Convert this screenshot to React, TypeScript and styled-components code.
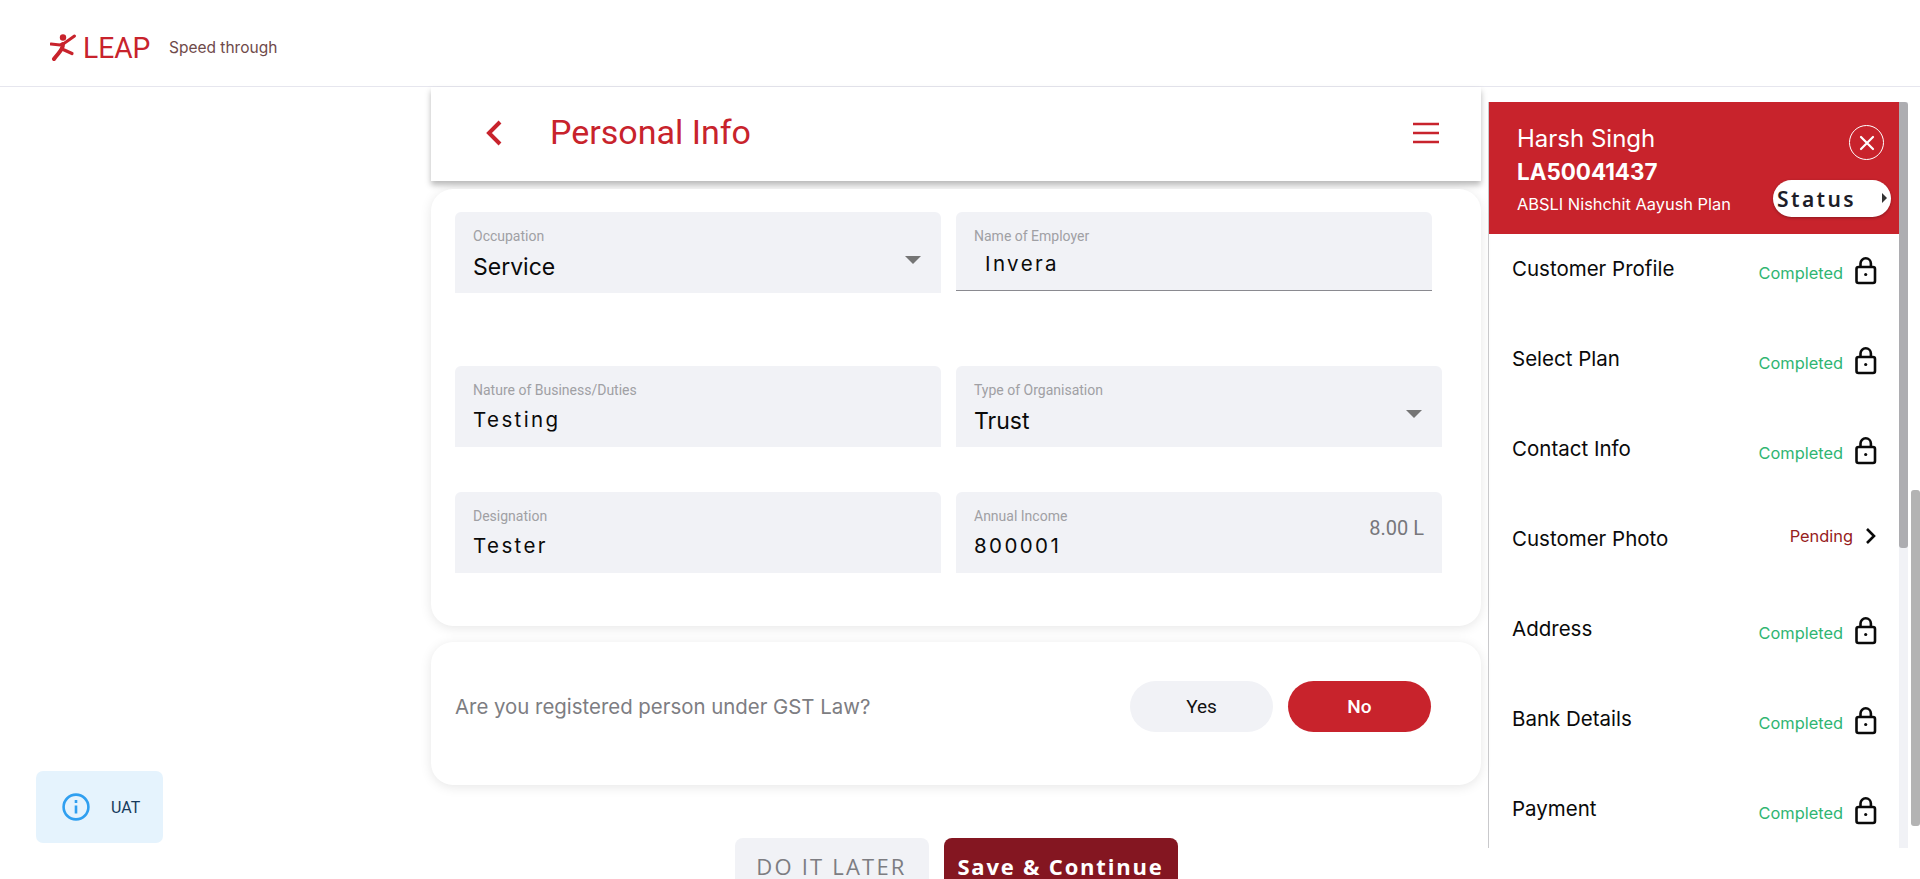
import React from "react";
import styled, { createGlobalStyle } from "styled-components";

const GlobalStyle = createGlobalStyle`
  html, body {
    margin: 0;
    padding: 0;
    height: 100%;
    overflow: hidden;
    background: #fff;
    font-family: "Inter", "Liberation Sans", sans-serif;
  }
  * { box-sizing: border-box; }
`;

const Page = styled.div`
  width: 1920px;
  height: 879px;
  display: flex;
  flex-direction: column;
  overflow: hidden;
  position: relative;
`;

const TopBar = styled.header`
  height: 87px;
  flex: none;
  display: flex;
  align-items: center;
  padding: 9px 0 0 50px;
  border-bottom: 1px solid #e6e6ee;
`;

const LogoWord = styled.span`
  font-family: "Roboto", sans-serif;
  font-size: 30px;
  color: #c8232c;
  margin-left: 6px;
  transform: scaleX(0.94);
  transform-origin: left center;
  width: 67px;
`;

const Tagline = styled.span`
  font-family: "Inter", sans-serif;
  font-size: 15.5px;
  color: #6f4a4a;
  margin-left: 19px;
`;

const Body = styled.div`
  flex: 1;
  min-height: 0;
  display: flex;
  padding-left: 431px;
`;

const Main = styled.main`
  width: 1050px;
  flex: none;
  display: flex;
  flex-direction: column;
`;

const TitleBar = styled.div`
  height: 94px;
  flex: none;
  display: flex;
  align-items: center;
  padding: 0 42px 3px 54px;
  background: #fff;
  box-shadow: 0 4px 6px rgba(0, 0, 0, 0.28);
`;

const Title = styled.h1`
  font-family: "Roboto", sans-serif;
  font-weight: 400;
  font-size: 34px;
  color: #c8232c;
  margin: 0 0 2px 47px;
  flex: 1;
`;

const Card = styled.section`
  background: #fff;
  border-radius: 22px;
  flex: none;
  box-shadow: 0 2px 12px rgba(0, 0, 0, 0.1);
`;

const FormCard = styled(Card)`
  height: 437px;
  margin-top: 8px;
  padding: 23px 24px 0;
`;

const FieldRow = styled.div<{ $gap: number }>`
  display: grid;
  grid-template-columns: 486px 486px;
  column-gap: 15px;
  margin-bottom: ${({ $gap }) => $gap}px;
`;

const Field = styled.div<{ $underlined?: boolean; $narrow?: boolean }>`
  height: ${({ $underlined }) => ($underlined ? "79px" : "81px")};
  width: ${({ $narrow }) => ($narrow ? "476px" : "100%")};
  background: #f1f2f6;
  border-radius: 6px 6px 0 0;
  padding: 16px 18px 0;
  position: relative;
  border-bottom: ${({ $underlined }) => ($underlined ? "1px solid #8a8a90" : "none")};
`;

const FieldLabel = styled.div`
  font-family: "Roboto", sans-serif;
  font-size: 14px;
  line-height: 17px;
  color: #a0a0a4;
`;

const FieldValue = styled.div<{ $spaced?: boolean; $indent?: boolean }>`
  font-family: "Inter", sans-serif;
  font-size: ${({ $spaced }) => ($spaced ? "20.5px" : "23px")};
  line-height: 28px;
  margin-top: ${({ $spaced, $indent }) => ($indent ? "5px" : $spaced ? "7px" : "8px")};
  color: #0a0a0a;
  letter-spacing: ${({ $spaced }) => ($spaced ? "2.4px" : "0")};
  padding-left: ${({ $indent }) => ($indent ? "11px" : "0")};
`;

const Caret = styled.span`
  position: absolute;
  right: 20px;
  top: 44px;
  width: 0;
  height: 0;
  border-left: 8px solid transparent;
  border-right: 8px solid transparent;
  border-top: 8px solid #757575;
`;

const Suffix = styled.span`
  position: absolute;
  right: 18px;
  top: 24px;
  font-family: "Roboto", sans-serif;
  font-size: 20px;
  color: #77777b;
`;

const GstCard = styled(Card)`
  height: 143px;
  margin-top: 16px;
  padding: 0 50px 0 24px;
  display: flex;
  align-items: center;
  justify-content: space-between;
`;

const GstQuestion = styled.span`
  font-size: 20.4px;
  color: #7d7d82;
  margin-top: -14px;
`;

const Choice = styled.div`
  display: flex;
  gap: 15px;
  margin-top: -15px;
`;

const Pill = styled.button<{ $active?: boolean }>`
  width: 143px;
  height: 51px;
  border: none;
  border-radius: 26px;
  font-family: "Roboto", sans-serif;
  font-size: 19px;
  font-weight: ${({ $active }) => ($active ? 500 : 400)};
  background: ${({ $active }) => ($active ? "#c8232c" : "#f1f2f6")};
  color: ${({ $active }) => ($active ? "#fff" : "#111")};
`;

const Actions = styled.div`
  display: flex;
  flex: none;
  justify-content: center;
  gap: 15px;
  margin-top: 53px;
`;

const ActionButton = styled.button<{ $primary?: boolean }>`
  height: 60px;
  width: ${({ $primary }) => ($primary ? "234px" : "194px")};
  border: none;
  border-radius: 8px;
  padding: 0 0 4px;
  flex: none;
  font-family: "Open Sans", sans-serif;
  font-size: 22px;
  letter-spacing: ${({ $primary }) => ($primary ? "1.8px" : "2.2px")};
  font-weight: ${({ $primary }) => ($primary ? 700 : 400)};
  background: ${({ $primary }) => ($primary ? "#841621" : "#f1f2f6")};
  color: ${({ $primary }) => ($primary ? "#fff" : "#7d7d82")};
`;

const Side = styled.aside`
  width: 421px;
  flex: none;
  margin-left: 7px;
  margin-top: 15px;
  height: 746px;
  display: flex;
  position: relative;
`;

const SidePanel = styled.div`
  width: 411px;
  border-left: 1px solid #c9c9cc;
  display: flex;
  flex-direction: column;
`;

const SideHead = styled.div`
  height: 132px;
  flex: none;
  background: #c8232c;
  color: #fff;
  padding: 21px 0 0 28px;
  position: relative;
`;

const Customer = styled.div`
  font-size: 24px;
  line-height: 32px;
`;

const AppNumber = styled.div`
  font-size: 22.4px;
  font-weight: 700;
  line-height: 34px;
`;

const PlanName = styled.div`
  font-size: 16.4px;
  line-height: 30px;
`;

const CloseButton = styled.button`
  position: absolute;
  right: 15px;
  top: 23px;
  width: 35px;
  height: 35px;
  padding: 0;
  border-radius: 50%;
  border: 1px solid #fff;
  background: transparent;
  display: flex;
  align-items: center;
  justify-content: center;
`;

const StatusPill = styled.div`
  position: absolute;
  right: 8px;
  bottom: 17px;
  width: 118px;
  height: 37px;
  border-radius: 19px;
  background: #fff;
  box-shadow: 0 1px 3px rgba(0, 0, 0, 0.3);
  font-family: "Noto Sans", sans-serif;
  font-weight: 600;
  font-size: 21px;
  letter-spacing: 2.4px;
  color: #1d1d28;
  display: flex;
  align-items: center;
  padding-left: 4px;
`;

const StatusArrow = styled.span`
  position: absolute;
  right: 4px;
  top: 13px;
  border-top: 5px solid transparent;
  border-bottom: 5px solid transparent;
  border-left: 5px solid #333;
`;

const Steps = styled.div`
  display: flex;
  flex-direction: column;
`;

const Step = styled.div`
  height: 90px;
  flex: none;
  display: flex;
  align-items: flex-start;
  padding: 21px 22px 0 23px;
`;

const StepName = styled.span`
  font-size: 20.5px;
  line-height: 28px;
  color: #0a0a0a;
  flex: 1;
`;

const StepState = styled.span<{ $pending?: boolean }>`
  font-size: 16.4px;
  line-height: 28px;
  color: ${({ $pending }) => ($pending ? "#962020" : "#2fb572")};
  margin-top: ${({ $pending }) => ($pending ? "-3px" : "4px")};
`;

const LockIcon = styled.svg`
  flex: none;
  margin: 2px 0 0 12px;
`;

const ChevronIcon = styled.svg`
  flex: none;
  margin: -3px 0 0 2px;
`;

const SideTrack = styled.div`
  width: 9px;
  flex: none;
  background: #f1f2f6;
  display: flex;
`;

const SideThumb = styled.div`
  width: 100%;
  height: 446px;
  background: #adadb1;
  border-radius: 0 3px 3px 3px;
`;

const PageThumb = styled.div`
  position: absolute;
  right: 0;
  top: 490px;
  width: 9px;
  height: 336px;
  background: #b3b3b3;
  border-radius: 3px;
`;

const EnvBadge = styled.div`
  position: absolute;
  left: 36px;
  top: 771px;
  width: 127px;
  height: 72px;
  border-radius: 7px;
  background: #e5f3fd;
  display: flex;
  align-items: center;
  padding-left: 26px;
  gap: 21px;
  font-family: "Roboto", sans-serif;
  font-size: 16px;
  color: #163a5c;
`;

const steps = [
  { name: "Customer Profile", state: "Completed" },
  { name: "Select Plan", state: "Completed" },
  { name: "Contact Info", state: "Completed" },
  { name: "Customer Photo", state: "Pending" },
  { name: "Address", state: "Completed" },
  { name: "Bank Details", state: "Completed" },
  { name: "Payment", state: "Completed" },
];

function LogoMark() {
  return (
    <svg width="27" height="27" viewBox="0 0 27 27" fill="none" stroke="#c8232c" strokeLinecap="round">
      <circle cx="13" cy="3.5" r="3.2" fill="#c8232c" stroke="none" />
      <path d="M1 10l9 1 4-1.500L24.500 2" strokeWidth="3" />
      <path d="M13 10c0 6-4 8-9 15" strokeWidth="4" />
      <path d="M12 15l10 4.500" strokeWidth="3.2" />
    </svg>
  );
}

function Lock() {
  return (
    <LockIcon width="22" height="28" viewBox="0 0 22 28" fill="none" stroke="#0a0a0a" strokeWidth="2.6">
      <rect x="1.500" y="10" width="18.500" height="16" rx="2" />
      <path d="M5.500 10V6.500a5.200 5.200 0 0 1 10.400 0V10" />
      <circle cx="10.700" cy="17.500" r="1.600" fill="#0a0a0a" stroke="none" />
    </LockIcon>
  );
}

function App() {
  return (
    <Page>
      <GlobalStyle />
      <TopBar>
        <LogoMark />
        <LogoWord>LEAP</LogoWord>
        <Tagline>Speed through</Tagline>
      </TopBar>
      <Body>
        <Main>
          <TitleBar>
            <svg width="18" height="28" viewBox="0 0 18 28" fill="none" stroke="#c8232c" strokeWidth="4">
              <path d="M15 3L4 14l11 11" />
            </svg>
            <Title>Personal Info</Title>
            <svg width="26" height="22" viewBox="0 0 26 22" fill="none" stroke="#c8232c" strokeWidth="2.400">
              <path d="M0 2h26M0 11h26M0 20h26" />
            </svg>
          </TitleBar>
          <FormCard>
            <FieldRow $gap={73}>
              <Field>
                <FieldLabel>Occupation</FieldLabel>
                <FieldValue>Service</FieldValue>
                <Caret />
              </Field>
              <Field $underlined $narrow>
                <FieldLabel>Name of Employer</FieldLabel>
                <FieldValue $spaced $indent>Invera</FieldValue>
              </Field>
            </FieldRow>
            <FieldRow $gap={45}>
              <Field>
                <FieldLabel>Nature of Business/Duties</FieldLabel>
                <FieldValue $spaced>Testing</FieldValue>
              </Field>
              <Field>
                <FieldLabel>Type of Organisation</FieldLabel>
                <FieldValue>Trust</FieldValue>
                <Caret />
              </Field>
            </FieldRow>
            <FieldRow $gap={0}>
              <Field>
                <FieldLabel>Designation</FieldLabel>
                <FieldValue $spaced>Tester</FieldValue>
              </Field>
              <Field>
                <FieldLabel>Annual Income</FieldLabel>
                <FieldValue $spaced>800001</FieldValue>
                <Suffix>8.00 L</Suffix>
              </Field>
            </FieldRow>
          </FormCard>
          <GstCard>
            <GstQuestion>Are you registered person under GST Law?</GstQuestion>
            <Choice>
              <Pill>Yes</Pill>
              <Pill $active>No</Pill>
            </Choice>
          </GstCard>
          <Actions>
            <ActionButton>DO IT LATER</ActionButton>
            <ActionButton $primary>Save &amp; Continue</ActionButton>
          </Actions>
        </Main>
        <Side>
          <SidePanel>
            <SideHead>
              <Customer>Harsh Singh</Customer>
              <AppNumber>LA50041437</AppNumber>
              <PlanName>ABSLI Nishchit Aayush Plan</PlanName>
              <CloseButton>
                <svg width="16" height="16" viewBox="0 0 16 16" stroke="#fff" strokeWidth="2.200" strokeLinecap="round">
                  <path d="M2 2l12 12M14 2L2 14" />
                </svg>
              </CloseButton>
              <StatusPill>
                Status
                <StatusArrow />
              </StatusPill>
            </SideHead>
            <Steps>
              {steps.map((step) => {
                const pending = step.state === "Pending";
                return (
                  <Step key={step.name}>
                    <StepName>{step.name}</StepName>
                    <StepState $pending={pending}>{step.state}</StepState>
                    {pending ? (
                      <ChevronIcon width="22" height="28" viewBox="0 0 22 28" fill="none" stroke="#0a0a0a" strokeWidth="2.600">
                        <path d="M12 7l7 7-7 7" />
                      </ChevronIcon>
                    ) : (
                      <Lock />
                    )}
                  </Step>
                );
              })}
            </Steps>
          </SidePanel>
          <SideTrack>
            <SideThumb />
          </SideTrack>
        </Side>
      </Body>
      <PageThumb />
      <EnvBadge>
        <svg width="28" height="28" viewBox="0 0 28 28" fill="none" stroke="#2f9ff0" strokeWidth="2.600">
          <circle cx="14" cy="14" r="12.400" />
          <path d="M14 12.500v8M14 7v3" />
        </svg>
        UAT
      </EnvBadge>
    </Page>
  );
}

export default App;
